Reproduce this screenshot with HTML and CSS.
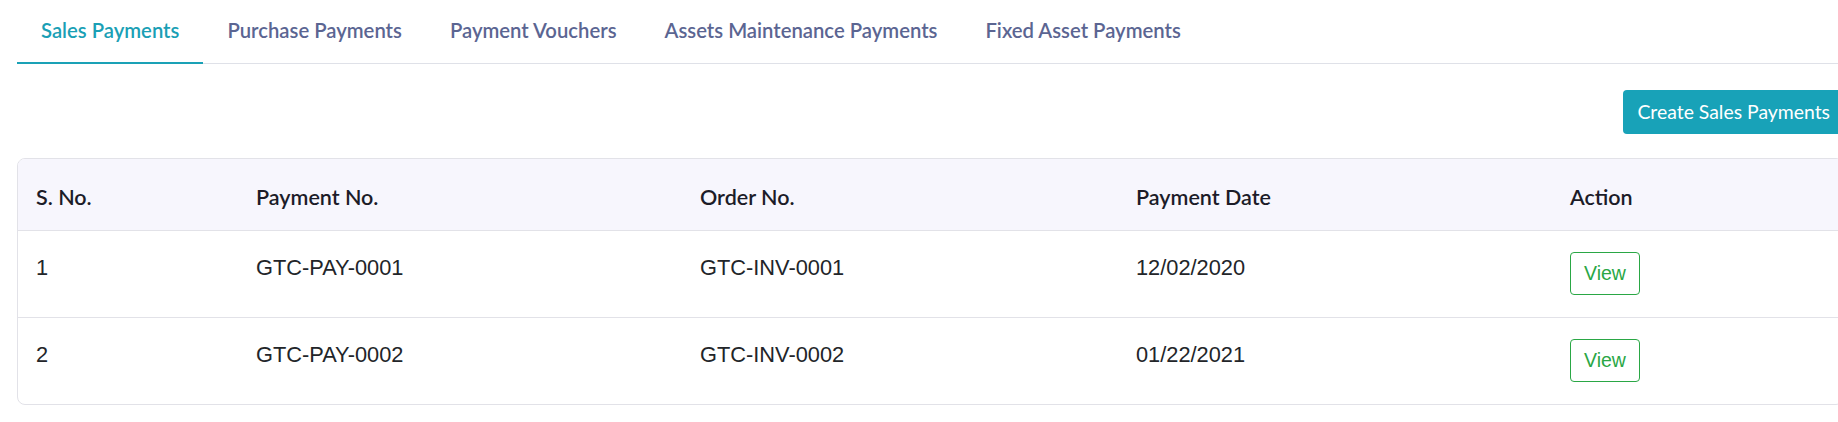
FILE: index.html
```html
<!DOCTYPE html>
<html lang="en">
<head>
  <meta charset="UTF-8">
  <title>Payments</title>
  <link rel="stylesheet" href="styles.css">
</head>
<body>
  <div class="page">
    <nav class="tabs">
      <a href="#" class="tab active">Sales Payments</a>
      <a href="#" class="tab">Purchase Payments</a>
      <a href="#" class="tab">Payment Vouchers</a>
      <a href="#" class="tab">Assets Maintenance Payments</a>
      <a href="#" class="tab">Fixed Asset Payments</a>
    </nav>

    <div class="toolbar">
      <button class="btn-create">Create Sales Payments</button>
    </div>

    <div class="card">
      <table class="payments">
        <colgroup>
          <col class="col-sno">
          <col class="col-pay">
          <col class="col-order">
          <col class="col-date">
          <col>
        </colgroup>
        <thead>
          <tr>
            <th>S. No.</th>
            <th>Payment No.</th>
            <th>Order No.</th>
            <th>Payment Date</th>
            <th>Action</th>
          </tr>
        </thead>
        <tbody>
          <tr>
            <td>1</td>
            <td>GTC-PAY-0001</td>
            <td>GTC-INV-0001</td>
            <td>12/02/2020</td>
            <td class="action"><button class="btn-view">View</button></td>
          </tr>
          <tr>
            <td>2</td>
            <td>GTC-PAY-0002</td>
            <td>GTC-INV-0002</td>
            <td>01/22/2021</td>
            <td class="action"><button class="btn-view">View</button></td>
          </tr>
        </tbody>
      </table>
    </div>
  </div>
</body>
</html>
```

FILE: styles.css
```css
body {
  margin: 0;
  padding: 0;
  background: #ffffff;
  overflow: hidden;
  font-family: Lato, "Open Sans", sans-serif;
}

.page {
  width: 1827px;
  padding-left: 17px;
}

/* onglets */
.tabs {
  display: flex;
  border-bottom: 1px solid #dfe1e8;
}

.tab {
  padding: 18px 24px 20px;
  line-height: 24px;
  font-size: 20.3px;
  font-weight: 600;
  color: #5b6592;
  text-decoration: none;
  border-bottom: 2px solid transparent;
  margin-bottom: -1px;
}

.tab.active {
  color: #1a9fb5;
  border-bottom-color: #1aa1b6;
}

.toolbar {
  display: flex;
  justify-content: flex-end;
  margin-top: 26px;
}

.btn-create {
  font-family: Lato, "Open Sans", sans-serif;
  font-size: 19.4px;
  line-height: 26px;
  padding: 9px 14px;
  color: #ffffff;
  background: #18a2b8;
  border: none;
  border-radius: 4px;
}

/* tableau */
.card {
  margin-top: 24px;
  border: 1px solid #e2e2e8;
  border-radius: 8px;
  overflow: hidden;
}

.payments {
  width: 100%;
  border-collapse: collapse;
  table-layout: fixed;
}

.col-sno { width: 220px; }
.col-pay { width: 444px; }
.col-order { width: 436px; }
.col-date { width: 434px; }

.payments th {
  background: #f7f6fd;
  text-align: left;
  font-size: 21.5px;
  font-weight: 600;
  line-height: 30px;
  color: #1c1c28;
  padding: 23px 18px 18px;
  border-bottom: 1px solid #e2e2e8;
}

.payments td {
  font-family: "Liberation Sans", Arial, sans-serif;
  font-size: 21.8px;
  line-height: 30px;
  color: #222529;
  padding: 22px 18px 34px;
  vertical-align: top;
}

.payments tbody tr + tr td {
  border-top: 1px solid #e2e2e8;
}

.payments td.action {
  padding: 21px 18px 22px;
}

.btn-view {
  display: block;
  height: 43px;
  padding: 0 13px;
  font-family: "Liberation Sans", Arial, sans-serif;
  font-size: 19.5px;
  color: #2aa745;
  background: #ffffff;
  border: 1px solid #2aa745;
  border-radius: 4px;
}
```
